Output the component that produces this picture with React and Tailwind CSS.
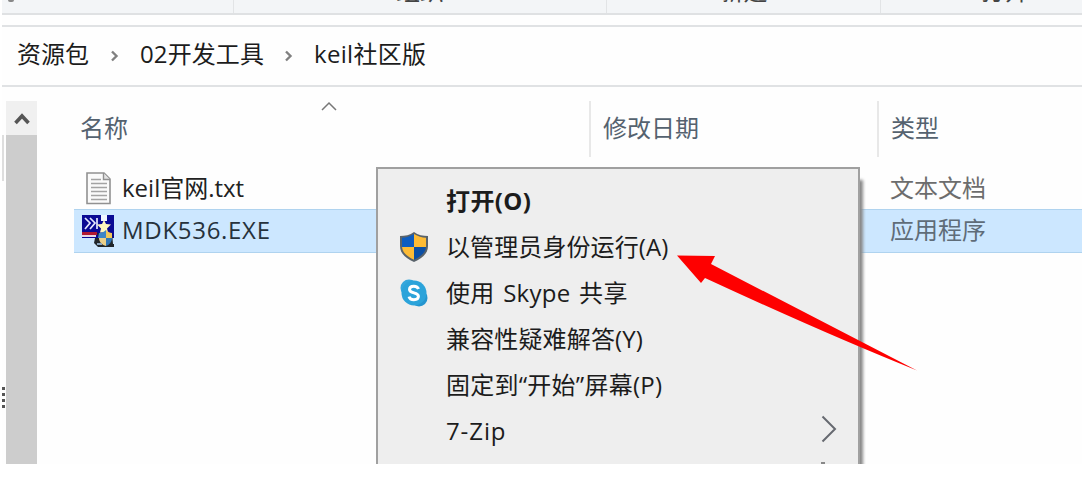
import React from "react";

const menuItems = [
  { label: "打开(O)", style: "font-bold tracking-[0.4px]" },
  { label: "以管理员身份运行(A)", icon: "shield", style: "tracking-[0.1px]" },
  { label: "使用 Skype 共享", icon: "skype", style: "tracking-[0.3px] [word-spacing:2px]" },
  { label: "兼容性疑难解答(Y)", style: "tracking-[0.15px]" },
  { label: "固定到“开始”屏幕(P)", style: "tracking-[0.25px]" },
  { label: "7-Zip", submenu: true, style: "tracking-[0.9px]" },
];

const ShieldIcon = () => (
  <svg width="30" height="32" viewBox="0 0 30 32">
    <path d="M15 1C11 4 6 5 1 5v10c0 7 5 12 14 16 9-4 14-9 14-16V5C24 5 19 4 15 1Z" fill="#59636b" />
    <path d="M15 3C11 5.500 7 6.500 3 6.800V16h12Z" fill="#0c5cc0" />
    <path d="M15 3c4 2.500 8 3.500 12 3.800V16H15Z" fill="#fdbb35" />
    <path d="M3 16h12v12.800C8 25.500 3.500 21.500 3 16Z" fill="#fdbb35" />
    <path d="M27 16H15v12.800C22 25.500 26.500 21.500 27 16Z" fill="#0b4fa5" />
  </svg>
);

const SkypeIcon = () => (
  <svg width="30" height="30" viewBox="0 0 30 30">
    <circle cx="10" cy="10" r="8.500" fill="#35a7dc" />
    <circle cx="20" cy="20" r="8.500" fill="#2495cf" />
    <circle cx="15" cy="15" r="12.500" fill="#2ba3da" />
    <path
      d="M19.500 11c-.7-2-2.500-2.800-4.700-2.800-2.500 0-4.300 1.100-4.300 3.200 0 4.600 8.900 2.400 8.900 6.900 0 2.200-2 3.400-4.500 3.400-2.400 0-4.300-1-4.900-3.100"
      fill="none"
      stroke="#fff"
      strokeWidth="3"
    />
  </svg>
);

const TextFileIcon = () => (
  <svg width="26" height="33" viewBox="0 0 26 33">
    <path d="M1 1h17l6 6v24.500H1Z" fill="#fafafa" stroke="#919191" strokeWidth="1.600" />
    <path d="M17.500 1v6.500H24" fill="#e4e4e4" stroke="#919191" strokeWidth="1.400" />
    <path d="M5 7.500h10M5 11.500h16M5 15.500h16M5 19.500h16M5 23.500h16M5 27.500h16" stroke="#a3a3a3" strokeWidth="1.500" />
  </svg>
);

const InstallerIcon = () => (
  <svg width="33" height="33" viewBox="0 0 33 33">
    <path d="M0 0h32v23H0Z" fill="#0a0a94" />
    <path d="M0 17h15v3H0Z" fill="#b01832" />
    <path d="M0 20h14v2H0Z" fill="#e9d5e2" />
    <path d="M3 3l5 5-5 6M8 3l5 5-5 6M15 3v11" fill="none" stroke="#e4e7ff" strokeWidth="1.700" />
    <path d="M19 0h6v6h-6Z" fill="#f2f6ff" />
    <path d="M13 23h4l-2-5h15l1 11h1v3H16l-4-4Z" fill="#20262b" />
    <path d="M22 5l2 4 5 .5-4 4 1 4h-8l1-4-4-4 5-.5Z" fill="#fff7bd" />
    <path d="M17 18c3 0 5-1 7-3v8h-8Z" fill="#3c86c8" />
    <path d="M24 15c2 2 4 3 6 3v5h-6Z" fill="#f1c85c" />
    <path d="M17 23h7v8c-4-1-7-4-7-8Z" fill="#ead08a" />
    <path d="M24 23h6c0 4-3 7-6 8Z" fill="#2f75b5" />
    <path d="M15 28h5v2h-5Z" fill="#8aa6c0" />
  </svg>
);

const Crumb = () => (
  <svg width="9" height="12" viewBox="0 0 9 12" className="mt-[3px]">
    <path d="M1 1.500l4.500 4.500L1 10.500" fill="none" stroke="#808080" strokeWidth="2.400" />
  </svg>
);

const Ribbon = () => (
  <div className="flex h-[15px] overflow-hidden border-b-2 border-[#dfe1e3] bg-[#f3f5f7] text-[#444]">
    <div className="w-[232px] border-r border-[#e2e4e6]">
      <div className="ml-1.5 h-0.5 w-1.5 rounded-b bg-[#888]" />
    </div>
    <div className="flex w-[373px] justify-center border-r border-[#e2e4e6]">
      <span className="-mt-[21px] h-6 leading-6">组织</span>
    </div>
    <div className="flex w-[274px] justify-center border-r border-[#e2e4e6]">
      <span className="-mt-[21px] h-6 leading-6">新建</span>
    </div>
    <div className="pl-[100px]">
      <span className="-mt-[21px] block h-6 leading-6">打开</span>
    </div>
  </div>
);

const AddressBar = () => (
  <div className="mt-2.5 flex h-[62px] items-center border-y-2 border-[#e0e2e4] pb-1 pl-[15px] whitespace-nowrap text-[#1c1c1c]">
    <span className="w-[94px]">资源包</span>
    <Crumb />
    <span className="ml-5 w-[145px] tracking-[0.1px]">02开发工具</span>
    <Crumb />
    <span className="ml-5 tracking-[0.3px]">keil社区版</span>
  </div>
);

const Scrollbar = () => (
  <div className="flex w-[35px] shrink-0 pt-3.5">
    <div className="w-1">
      <div className="mt-[34px] h-[46px] w-0.5 bg-[#dedede]" />
      <div className="mt-[206px] flex flex-col gap-[3px]">
        <div className="size-[3px] bg-[#555]" />
        <div className="size-[3px] bg-[#555]" />
        <div className="size-[3px] bg-[#555]" />
        <div className="size-[3px] bg-[#555]" />
      </div>
    </div>
    <div className="flex flex-1 flex-col bg-[#cdcdcd]">
      <div className="flex h-[34px] items-center justify-center bg-[#f0f0f0]">
        <svg width="16" height="13" viewBox="0 0 16 13">
          <path d="M1.500 11L8 4l6.500 7" fill="none" stroke="#555" strokeWidth="3.600" />
        </svg>
      </div>
    </div>
  </div>
);

const FileList = () => (
  <div className="flex-1 pl-[37px]">
    <div className="flex h-[70px] text-[#55626f]">
      <div className="flex w-[515px]">
        <span className="w-[241px] pt-[26px] pl-1.5 leading-[30px]">名称</span>
        <svg width="16" height="10" viewBox="0 0 16 10" className="mt-[14px] ml-[6px]">
          <path d="M1 9l7-7 7 7" fill="none" stroke="#777" strokeWidth="1.500" />
        </svg>
      </div>
      <div className="mt-3.5 w-[288px] border-l-2 border-[#e8e8e8] pt-3 pl-3 leading-[30px]">修改日期</div>
      <div className="mt-3.5 flex-1 border-l-2 border-[#e8e8e8] pt-3 pl-3 leading-[30px]">类型</div>
    </div>
    <div className="mt-2.5 flex h-[42px] items-center pl-3">
      <TextFileIcon />
      <span className="ml-2.5 w-[768px] text-[#222]">keil官网.txt</span>
      <span className="text-[#6d6d6d]">文本文档</span>
    </div>
    <div className="flex h-11 items-center border-y border-[#afd3ef] bg-[#cce7ff] pl-2">
      <InstallerIcon />
      <span className="ml-[7px] w-[768px] pb-0.5 tracking-[0.7px] text-[#26323c]">MDK536.EXE</span>
      <span className="pb-0.5 text-[#5f6c78]">应用程序</span>
    </div>
  </div>
);

const ContextMenu = () => (
  <div className="absolute top-[167px] left-[376px] h-[297px] w-[490px] overflow-hidden">
    <div className="h-[310px] w-[484px] border-2 border-[#a0a0a0] bg-[#eeeeee] pt-[9px] text-[#1c1c1c] shadow-[4px_12px_3px_-1px_#888888]">
      {menuItems.map((item) => (
        <div key={item.label} className="flex h-[46px] items-center pr-[21px] whitespace-nowrap">
          <div className="flex w-[68px] items-center pl-[21px]">
            {item.icon === "shield" && <ShieldIcon />}
            {item.icon === "skype" && <SkypeIcon />}
          </div>
          <span className={`flex-1 pb-px ${item.style}`}>{item.label}</span>
          {item.submenu && (
            <svg width="16" height="28" viewBox="0 0 16 28" className="mb-1">
              <path d="M1.500 1.500L14 14 1.500 26.500" fill="none" stroke="#666970" strokeWidth="2" />
            </svg>
          )}
        </div>
      ))}
      <div className="mt-2 ml-[443px] h-1 w-1 bg-[#888]" />
    </div>
  </div>
);

const App = () => {
  return (
    <div className="h-[485px] w-[1082px] overflow-hidden bg-white pl-0.5 font-['Open_Sans','Noto_Sans_CJK_SC',sans-serif] text-[24px]">
      <div className="flex h-[464px] flex-col overflow-hidden bg-[#fefefe]">
        <Ribbon />
        <AddressBar />
        <div className="flex flex-1">
          <Scrollbar />
          <FileList />
        </div>
      </div>
      <ContextMenu />
      {/* pointer to the run-as-admin entry */}
      <svg width="242" height="118" viewBox="0 0 242 118" className="absolute top-[254px] left-[676px]">
        <path d="M1 1.500L39 2l-4 8 206 106.500Q150 80 29 24l-4 5Z" fill="#fe0000" />
      </svg>
    </div>
  );
};

export default App;
